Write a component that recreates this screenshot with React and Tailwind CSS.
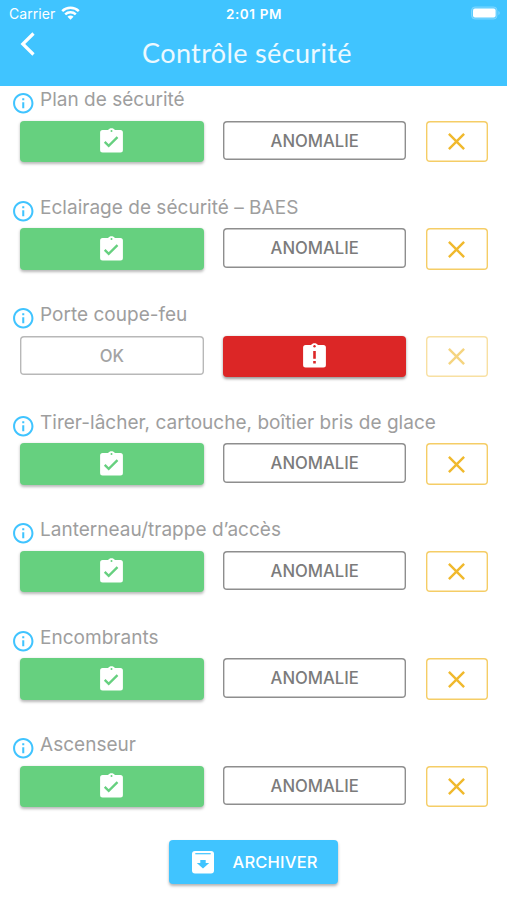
import React from 'react';
import { MdClose, MdInfoOutline } from "react-icons/md";

const controls = [
    { id: 1, label: "Plan de sécurité", status: "ok" },
    { id: 2, label: "Eclairage de sécurité – BAES", status: "ok" },
    { id: 3, label: "Porte coupe-feu", status: "anomaly" },
    { id: 4, label: "Tirer-lâcher, cartouche, boîtier bris de glace", status: "ok" },
    { id: 5, label: "Lanterneau/trappe d’accès", status: "ok" },
    { id: 6, label: "Encombrants", status: "ok" },
    { id: 7, label: "Ascenseur", status: "ok" },
];

// Clipboard with a shallow clip, the mark on it takes the button's colour
function Clipboard({ children }) {
    return (
        <svg className="-mt-[1.5px]" width="23" height="25" viewBox="0 0 23 25">
            <path
                d="M2.6 2.1h5.5C8.9.8 10 .2 11.5.2s2.6.6 3.4 1.9h5.5a2.5 2.5 0 0 1 2.5 2.5V22a2.5 2.5 0 0 1-2.5 2.5H2.6A2.5 2.5 0 0 1 .1 22V4.6a2.5 2.5 0 0 1 2.5-2.5Z"
                fill="white"
            />
            {children}
        </svg>
    );
}

function ArchiveIcon() {
    return (
        <svg width="22" height="23" viewBox="0 0 22 23">
            <rect width="22" height="22.4" rx="3" fill="white" />
            <path d="M3.3 2.7h15.4" stroke="#40c4ff" strokeWidth="1.2" />
            <path d="M8.3 9h5.4v3h3.5L11 17.6 4.800 12h3.500Z" fill="#40c4ff" />
        </svg>
    );
}

function StatusBar() {
    return (
        <div className="grid grid-cols-3 items-center h-7 pl-[9px] pr-[6px]">
            <div className="flex items-center gap-[6px]">
                <span className="text-[14px] leading-7 tracking-[0.05px]">Carrier</span>
                <svg className="-mt-[2px]" width="19" height="14" viewBox="0 0 19 14" fill="none" stroke="currentColor" strokeWidth="2.5">
                    <path d="M1.2 5.1a12 12 0 0 1 16.6 0" />
                    <path d="M4.2 8.4a7.7 7.7 0 0 1 10.6 0" />
                    <path d="M9.5 13.8l-3-3a4.2 4.2 0 0 1 6 0Z" fill="currentColor" stroke="none" />
                </svg>
            </div>
            <span className="text-center text-[13.5px] leading-7 font-semibold tracking-[0.6px] -ml-[2px]">2:01 PM</span>
            <svg className="justify-self-end -mt-[2px]" width="31" height="14" viewBox="0 0 31 14">
                <rect x="1.5" y="0.9" width="25.5" height="12.2" rx="3.5" fill="white" fillOpacity="0.15" stroke="white" strokeOpacity="0.25" />
                <rect x="3" y="2.5" width="22.6" height="9" rx="2" fill="white" />
                <path d="M28.5 5v4c1.5-.6 1.5-3.4 0-4Z" fill="white" fillOpacity="0.4" />
            </svg>
        </div>
    );
}

function Header() {
    return (
        <header className="h-[86px] bg-[#40c4ff] text-white">
            <StatusBar />
            <div className="grid grid-cols-[50px_1fr_63px] h-[58px]">
                <button className="pl-[20px] pt-[3px] self-start">
                    <svg width="17" height="26" viewBox="0 0 17 26" fill="none" stroke="currentColor" strokeWidth="3.2">
                        <path d="M13.5 2.5 2.8 13l10.7 10.5" />
                    </svg>
                </button>
                <h1 className="justify-self-center font-[Lato,sans-serif] text-[27px] leading-[50px] tracking-[0.35px] whitespace-nowrap text-white/90">Contrôle sécurité</h1>
            </div>
        </header>
    );
}

function ControlRow({ control }) {
    const isOk = control.status === "ok";

    return (
        <div className="h-[107.5px]">
            <div className="flex h-[34.7px] pl-[10.5px] gap-[5px]">
                <MdInfoOutline className="mt-[5px] size-[24.5px] shrink-0 text-[#40c4ff]" />
                <span className="text-[19px] leading-[27px] tracking-[0.02px] text-[#9e9e9e] whitespace-nowrap">{control.label}</span>
            </div>
            <div className="grid grid-cols-[183.3px_183.3px_61.9px] gap-[19.5px] pl-[20.3px] items-start">
                {isOk ? (
                    <button className="flex h-[41.6px] items-center justify-center rounded-[4px] bg-[#66d07f] shadow-[0_1.5px_3px_rgba(0,0,0,0.28)]">
                        <Clipboard>
                            <circle cx="11.5" cy="2.9" r="1" fill="#66d07f" />
                            <path d="m4.7 13.9 4 4 8.8-8.800" fill="none" stroke="#66d07f" strokeWidth="2.3" />
                        </Clipboard>
                    </button>
                ) : (
                    <button className="h-[39.5px] rounded-[4px] shadow-[inset_0_0_0_1.4px_#b8b8b8] text-[16.7px] leading-[40px] font-medium text-[#a3a3a3]">OK</button>
                )}
                {isOk ? (
                    <button className="h-[39.5px] rounded-[4px] shadow-[inset_0_0_0_1.4px_#8e8e8e] text-[16.7px] leading-[40px] font-medium text-[#7b7b7b]">ANOMALIE</button>
                ) : (
                    <button className="flex h-[41.6px] items-center justify-center rounded-[4px] bg-[#dc2626] shadow-[0_1.5px_3px_rgba(0,0,0,0.4)]">
                        <Clipboard>
                            <circle cx="11.5" cy="3.3" r="1.2" fill="#dc2626" />
                            <path d="M11.5 8v7.8M11.5 18v2.6" stroke="#dc2626" strokeWidth="2.6" />
                        </Clipboard>
                    </button>
                )}
                <button className={`flex h-[41.8px] items-center justify-center rounded-[4px] shadow-[inset_0_0_0_1.4px_#f5cd66] text-[#f0b92d] ${isOk ? "" : "opacity-60"}`}>
                    <MdClose className="size-[29px]" />
                </button>
            </div>
        </div>
    );
}

function App() {
    return (
        <div className="flex h-[900px] w-[507px] flex-col overflow-hidden bg-white font-[Inter,sans-serif]">
            <Header />
            <main>
                {controls.map((control) => (
                    <ControlRow key={control.id} control={control} />
                ))}
            </main>
            <button className="mt-[1.5px] flex h-[44px] w-[169px] shrink-0 items-center self-center rounded-[4px] bg-[#40c4ff] pl-[23px] text-white shadow-[0_2px_3px_rgba(0,0,0,0.3)]">
                <ArchiveIcon />
                <span className="ml-[18.5px] text-[16.5px] font-medium tracking-[0.2px]">ARCHIVER</span>
            </button>
        </div>
    );
}

export default App;
